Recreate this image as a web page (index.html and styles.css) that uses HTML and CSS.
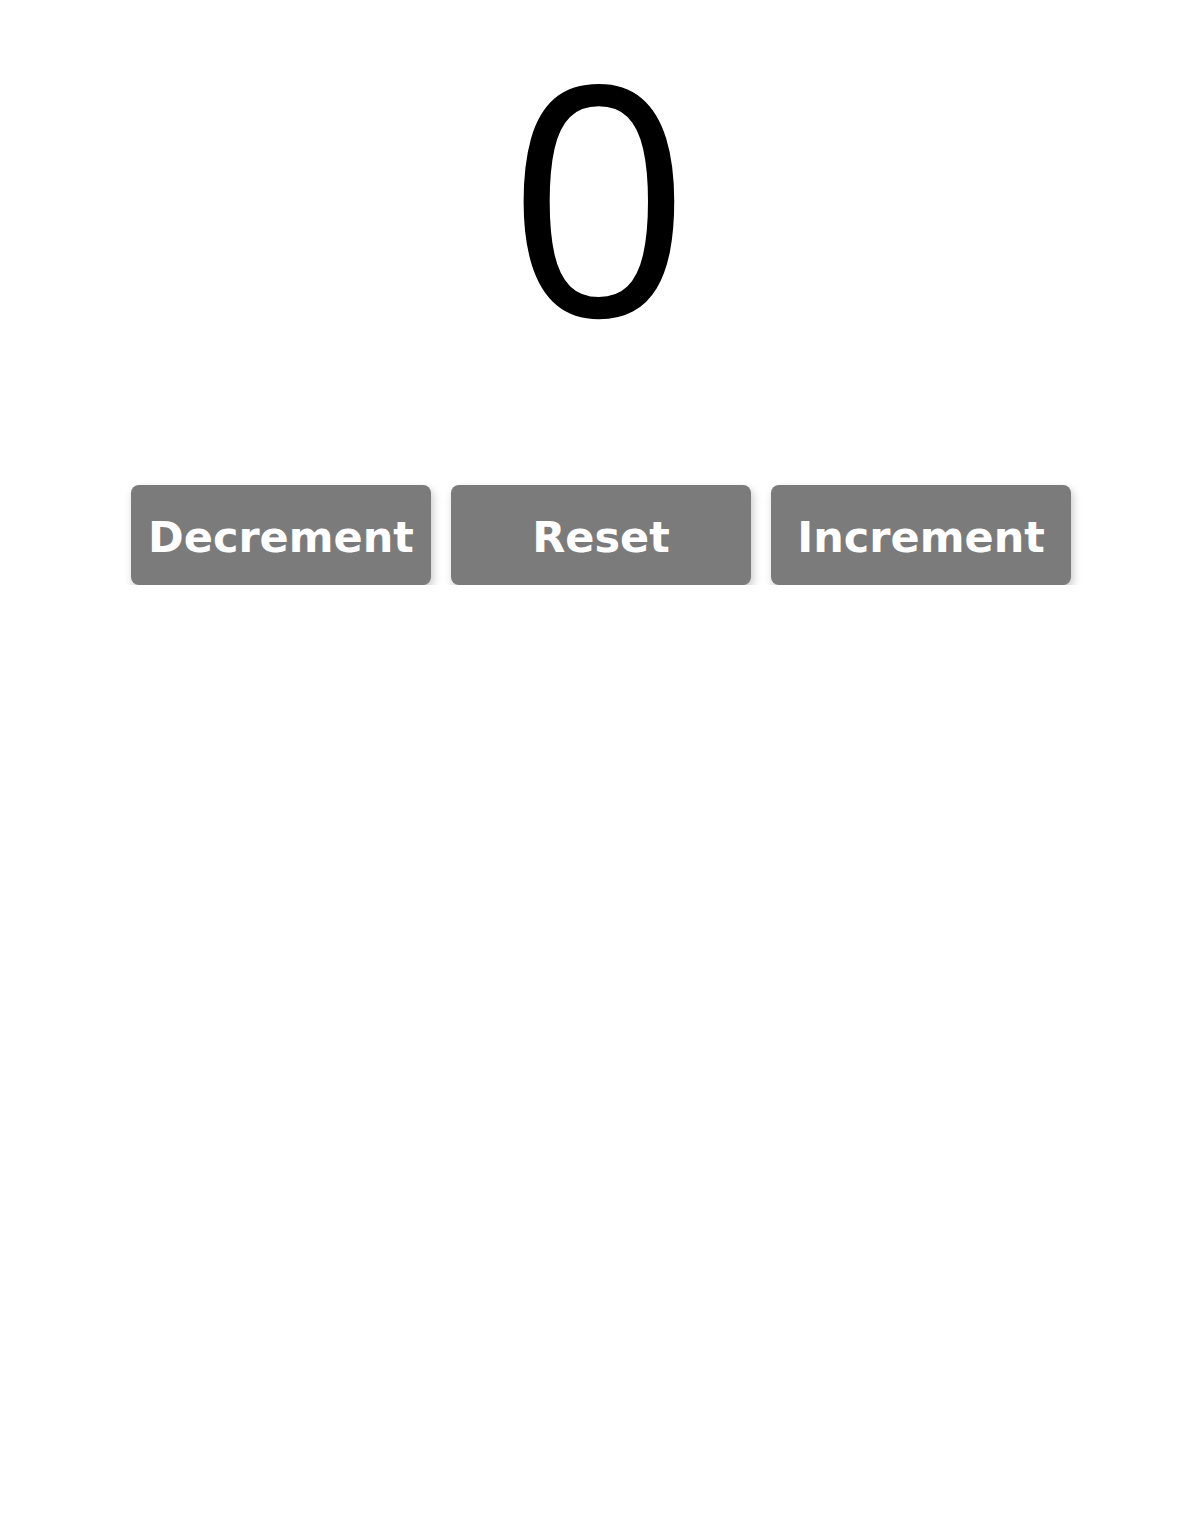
FILE: index.html
```html
<!DOCTYPE html>
<html>
<head>
<meta charset="utf-8">
<link rel="stylesheet" href="styles.css">
</head>
<body>
<div class="app">
  <div class="count">0</div>
  <div class="buttons">
    <button class="btn">Decrement</button>
    <button class="btn">Reset</button>
    <button class="btn">Increment</button>
  </div>
</div>
</body>
</html>
```

FILE: styles.css
```css
html, body {
  margin: 0;
  padding: 0;
  background: #ffffff;
}
.app {
  display: flex;
  flex-direction: column;
  align-items: center;
}
.count {
  font-family: "Open Sans", "Noto Sans", sans-serif;
  font-size: 320px;
  line-height: 1.2;
  color: #000;
  margin-top: 0;
}
.buttons {
  display: flex;
  gap: 20px;
  justify-content: center;
  margin-top: 101px;
  padding-left: 4px;
}
.btn {
  width: 300px;
  height: 100px;
  background: #7b7b7b;
  color: #fff;
  border: none;
  border-radius: 8px;
  font-family: "DejaVu Sans", sans-serif;
  font-weight: bold;
  font-size: 43px;
  box-shadow: 2px 4px 8px rgba(0,0,0,0.22);
  padding: 4px 0 0 0;
}
```
